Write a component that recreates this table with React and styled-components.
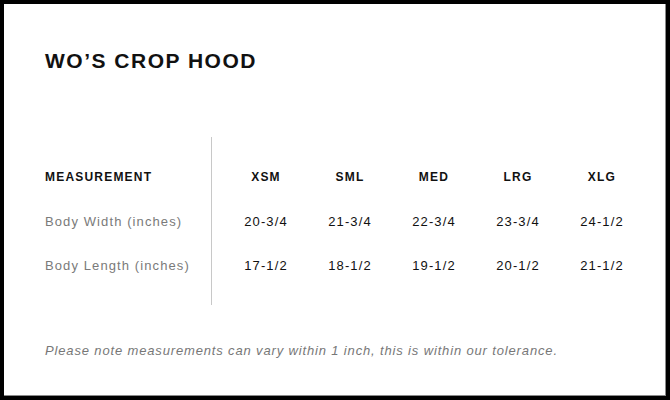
import styled, { createGlobalStyle } from 'styled-components';

const GlobalStyle = createGlobalStyle`
  html, body {
    margin: 0;
    padding: 0;
    background: #fff;
  }
  body {
    font-family: 'Liberation Sans', Arial, sans-serif;
  }
`;

const Frame = styled.div`
  box-sizing: border-box;
  width: 670px;
  height: 400px;
  border: 4px solid #000;
  box-shadow: inset -1px -1px 0 #8a8a8a;
  background: #fff;
  padding: 45px 0 0 41px;
  display: flex;
  flex-direction: column;
`;

const Title = styled.h1`
  margin: 0;
  font-size: 21px;
  line-height: 24px;
  font-weight: 700;
  letter-spacing: 1.5px;
  color: #111;
`;

const Table = styled.div`
  margin-top: 64px;
  display: flex;
`;

const LabelColumn = styled.div`
  width: 166px;
  border-right: 1px solid #c8c8c8;
  padding: 18px 0;
  display: flex;
  flex-direction: column;
`;

const Sizes = styled.div`
  padding-left: 12px;
  display: grid;
  grid-template-columns: repeat(5, 84px);
`;

const SizeColumn = styled.div`
  padding: 18px 0;
  display: flex;
  flex-direction: column;
  align-items: center;
`;

const Cell = styled.div`
  height: 44px;
  display: flex;
  align-items: center;
  white-space: nowrap;
  font-size: ${p => (p.head ? '12px' : '13px')};
  font-weight: ${p => (p.head ? 700 : 400)};
  letter-spacing: ${p => (p.head ? '1.2px' : '1.1px')};
  color: ${p => (p.muted ? '#7a7a7a' : '#111')};
`;

const Note = styled.p`
  margin: 38px 0 0;
  font-size: 13px;
  line-height: 16px;
  font-style: italic;
  letter-spacing: 0.85px;
  color: #777;
`;

const sizes = [
  { name: 'XSM', width: '20-3/4', length: '17-1/2' },
  { name: 'SML', width: '21-3/4', length: '18-1/2' },
  { name: 'MED', width: '22-3/4', length: '19-1/2' },
  { name: 'LRG', width: '23-3/4', length: '20-1/2' },
  { name: 'XLG', width: '24-1/2', length: '21-1/2' },
];

export default function App() {
  return (
    <>
      <GlobalStyle />
      <Frame>
        <Title>WO’S CROP HOOD</Title>
        <Table>
          <LabelColumn>
            <Cell head>MEASUREMENT</Cell>
            <Cell muted>Body Width (inches)</Cell>
            <Cell muted>Body Length (inches)</Cell>
          </LabelColumn>
          <Sizes>
            {sizes.map(s => (
              <SizeColumn key={s.name}>
                <Cell head>{s.name}</Cell>
                <Cell>{s.width}</Cell>
                <Cell>{s.length}</Cell>
              </SizeColumn>
            ))}
          </Sizes>
        </Table>
        <Note>Please note measurements can vary within 1 inch, this is within our tolerance.</Note>
      </Frame>
    </>
  );
}
